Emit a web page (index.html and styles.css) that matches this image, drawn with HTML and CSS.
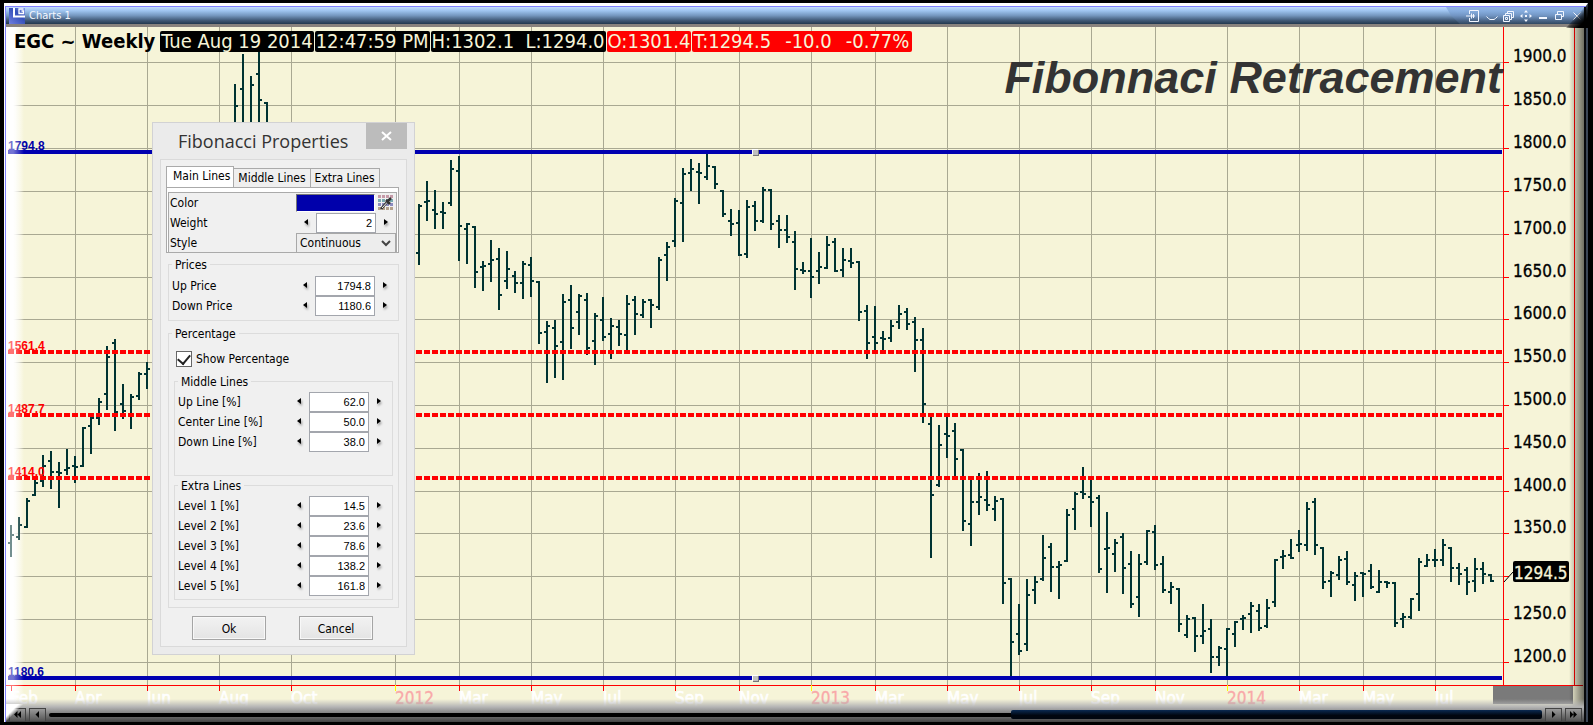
FILE: index.html
```html
<!DOCTYPE html>
<html lang="en">
<head>
<meta charset="utf-8">
<title>Charts 1</title>
<link rel="stylesheet" href="styles.css">
</head>
<body>
<main class="window">
  <header class="titlebar">
    <svg class="logo" width="19" height="16" viewBox="0 0 19 16" aria-hidden="true">
      <defs><linearGradient id="lg" x1="0" x2="1" y1="1" y2="0"><stop offset="0" stop-color="#6f7ee0"/><stop offset=".6" stop-color="#3450b8"/><stop offset="1" stop-color="#7f9ae6"/></linearGradient></defs>
      <rect x="3" width="16" height="16" fill="url(#lg)"/>
      <path d="M8 0v8.500h11" fill="none" stroke="#fff" stroke-width="2"/>
      <path d="M17.500 1h-4.500v4.500h4.500v-2.500h-2" fill="none" stroke="#fff" stroke-width="1.300"/>
    </svg>
    <h1 class="caption">Charts 1</h1>
    <nav class="tools" aria-label="Window">
      <button class="dock" aria-label="Dock"><svg width="13" height="12" viewBox="0 0 13 12"><path d="M3.500 4V.5h9v11h-9V8M0 6h9M5.500 3.500v5M7.500 4v4"/></svg></button>
      <button aria-label="Hide"><svg width="12" height="12" viewBox="0 0 12 12"><path d="M.5 6.500l2 2 1.500 1h4l1.500-1 2-2"/></svg></button>
      <button aria-label="Cascade"><svg width="12" height="12" viewBox="0 0 12 12"><path d="M.5 5.500h6v6h-6zM2.500 7.500h2v2h-2zM2.500 5V3.500h6v6H7M4.500 3V1.500h6v6H9"/></svg></button>
      <button aria-label="Move"><svg width="12" height="12" viewBox="0 0 12 12"><path class="solid" d="M6 0l2 2.500H4zM6 12l2-2.500H4zM0 6l2.500-2v4zM12 6L9.500 4v4zM5 5h2v2H5z"/></svg></button>
      <button aria-label="Minimize"><svg width="12" height="12" viewBox="0 0 12 12"><path d="M2 8h8" stroke-width="2"/></svg></button>
      <button aria-label="Restore"><svg width="12" height="12" viewBox="0 0 12 12"><path d="M1.500 4.500h6v5h-6zM3.500 4V1.500h6v5H8"/></svg></button>
      <button aria-label="Close"><svg width="12" height="12" viewBox="0 0 12 12"><path d="M2.500 2.500l7 7M9.500 2.500l-7 7"/></svg></button>
    </nav>
  </header>

  <section class="chart">
    <svg class="plot" id="plot" role="img" aria-label="EGC weekly price chart"></svg>
    <div class="quote">
      <strong class="symbol">EGC ~ Weekly</strong>
      <span class="cell">Tue Aug 19 2014</span>
      <span class="cell">12:47:59 PM</span>
      <span class="cell">H:1302.1&nbsp; L:1294.0</span>
      <span class="cell down">O:1301.4</span>
      <span class="cell down last"><span>T:1294.5</span><span>-10.0</span><span>-0.77%</span></span>
    </div>

    <form class="dialog" aria-labelledby="dlg-title">
      <div class="dialog-head">
        <h2 class="dialog-title" id="dlg-title">Fibonacci Properties</h2>
        <button class="dialog-close" type="button" aria-label="Close"><svg width="11" height="10" viewBox="0 0 11 10"><path d="M1 1l9 8M10 1L1 9" stroke="#fff" stroke-width="2"/></svg></button>
      </div>
      <div class="panel">
        <div class="tabs" role="tablist">
          <button class="tab active" type="button" role="tab" aria-selected="true">Main Lines</button>
          <button class="tab" type="button" role="tab">Middle Lines</button>
          <button class="tab" type="button" role="tab">Extra Lines</button>
        </div>
        <div class="tabpage"><div class="tabinner">
          <div class="row"><span class="label">Color</span><button class="swatch" type="button" aria-label="Line color"></button>
            <button class="palette" type="button" aria-label="Pick color"><svg width="16" height="16" viewBox="0 0 16 16"><g stroke-width="3" stroke-dasharray="3 1"><path d="M0 1.500h16" stroke="#c59aa8"/><path d="M0 5.500h16" stroke="#78aab0"/><path d="M0 9.500h16" stroke="#8c8cc0"/><path d="M0 13.500h16" stroke="#b4a18c"/></g><path d="M3 14l7-8" stroke="#333" stroke-width="2.500"/><path d="M4 13l5.500-6" stroke="#eee"/><path d="M8 5l4 4M10 6l3-3" stroke="#333" stroke-width="2.500"/></svg></button></div>
          <div class="row"><label class="label" for="weight">Weight</label><button class="step prev" type="button" aria-label="Less"></button><input class="num" id="weight" value="2"><button class="step next" type="button" aria-label="More"></button></div>
          <div class="row"><label class="label" for="style">Style</label><span class="pick"><select id="style"><option>Continuous</option></select><svg width="10" height="7" viewBox="0 0 10 7"><path d="M1 1l4 4 4-4" fill="none" stroke="#444" stroke-width="2"/></svg></span></div>
        </div></div>

        <fieldset class="group prices">
          <legend>Prices</legend>
          <div class="row"><label class="label" for="up">Up Price</label><button class="step prev" type="button" aria-label="Less"></button><input class="num" id="up" value="1794.8"><button class="step next" type="button" aria-label="More"></button></div>
          <div class="row"><label class="label" for="down">Down Price</label><button class="step prev" type="button" aria-label="Less"></button><input class="num" id="down" value="1180.6"><button class="step next" type="button" aria-label="More"></button></div>
        </fieldset>

        <fieldset class="group percent">
          <legend>Percentage</legend>
          <div class="check"><input type="checkbox" id="show" checked><label for="show">Show Percentage</label></div>
          <fieldset class="group middle">
            <legend>Middle Lines</legend>
            <div class="row"><label class="label" for="m1">Up Line [%]</label><button class="step prev" type="button" aria-label="Less"></button><input class="num" id="m1" value="62.0"><button class="step next" type="button" aria-label="More"></button></div>
            <div class="row"><label class="label" for="m2">Center Line [%]</label><button class="step prev" type="button" aria-label="Less"></button><input class="num" id="m2" value="50.0"><button class="step next" type="button" aria-label="More"></button></div>
            <div class="row"><label class="label" for="m3">Down Line [%]</label><button class="step prev" type="button" aria-label="Less"></button><input class="num" id="m3" value="38.0"><button class="step next" type="button" aria-label="More"></button></div>
          </fieldset>
          <fieldset class="group extra">
            <legend>Extra Lines</legend>
            <div class="row"><label class="label" for="e1">Level 1 [%]</label><button class="step prev" type="button" aria-label="Less"></button><input class="num" id="e1" value="14.5"><button class="step next" type="button" aria-label="More"></button></div>
            <div class="row"><label class="label" for="e2">Level 2 [%]</label><button class="step prev" type="button" aria-label="Less"></button><input class="num" id="e2" value="23.6"><button class="step next" type="button" aria-label="More"></button></div>
            <div class="row"><label class="label" for="e3">Level 3 [%]</label><button class="step prev" type="button" aria-label="Less"></button><input class="num" id="e3" value="78.6"><button class="step next" type="button" aria-label="More"></button></div>
            <div class="row"><label class="label" for="e4">Level 4 [%]</label><button class="step prev" type="button" aria-label="Less"></button><input class="num" id="e4" value="138.2"><button class="step next" type="button" aria-label="More"></button></div>
            <div class="row"><label class="label" for="e5">Level 5 [%]</label><button class="step prev" type="button" aria-label="Less"></button><input class="num" id="e5" value="161.8"><button class="step next" type="button" aria-label="More"></button></div>
          </fieldset>
        </fieldset>
        <div class="actions"><button class="push" type="button">Ok</button><button class="push" type="button">Cancel</button></div>
      </div>
    </form>
  </section>

  <footer class="scroller">
    <button class="nudge" aria-label="First"><svg width="7" height="7" viewBox="0 0 7 7"><path d="M3.500 0v7L0 3.500zM7 0v7L3.500 3.500z"/></svg></button>
    <button class="nudge" aria-label="Back"><svg width="7" height="7" viewBox="0 0 7 7"><path d="M5 0v7L1.500 3.500z"/></svg></button>
    <div class="track" role="scrollbar" aria-label="Time" aria-controls="plot" aria-valuenow="100"><div class="thumb"></div></div>
    <button class="nudge" aria-label="Forward"><svg width="7" height="7" viewBox="0 0 7 7"><path d="M2 0v7l3.500-3.500z"/></svg></button>
    <button class="nudge" aria-label="Last"><svg width="7" height="7" viewBox="0 0 7 7"><path d="M0 0v7l3.500-3.500zM3.500 0v7L7 3.500z"/></svg></button>
  </footer>
</main>
<script src="chart.js"></script>
</body>
</html>
```
FILE: styles.css
```css
* { box-sizing: border-box; }
html, body { height: 100%; }
body {
  margin: 0;
  padding: 3px 5px 3px 4px;
  background: #000;
  font: 12px/16px "DejaVu Sans Condensed", "DejaVu Sans", sans-serif;
  color: #000;
}
button, input, select { font: inherit; color: inherit; margin: 0; padding: 0; border: 0; background: none; }
h1, h2 { margin: 0; font-weight: normal; }

.window {
  position: relative;
  display: flex;
  flex-direction: column;
  height: 100%;
  border-top: 3px solid #fff;
  border-left: 1px solid #fff;
  border-right: 2px solid #3c4656;
  box-shadow: inset 1px 1px #8080ff, inset -2px 0 #08090c;
  padding: 1px 2px 0 1px;
}
.window::after {
  content: "";
  position: absolute;
  top: -3px;
  right: -2px;
  width: 22px;
  height: 25px;
  background: linear-gradient(135deg, transparent 46%, rgba(0, 0, 0, .6) 60%, #000 78%);
  clip-path: polygon(100% 0, 100% 100%, 0 100%);
  pointer-events: none;
}

/* Title bar */
.titlebar {
  flex: none;
  display: flex;
  align-items: stretch;
  height: 20px;
  background: linear-gradient(#c4dcfa, #9ec4f0 22%, #7597bf 50%, #3e5673 80%, #22384f);
  border-bottom: 3px solid #88827e;
}
.logo { flex: none; margin-top: 1px; margin-right: 4px; }
.caption { flex: 1; font-size: 11px; line-height: 17px; color: #f4f8ff; }
.tools {
  display: flex;
  align-items: center;
  gap: 5px;
  padding: 0 1px 0 20px;
  background: linear-gradient(rgba(100, 140, 200, .5), rgba(130, 160, 210, .15));
  clip-path: polygon(0 0, 100% 0, 100% 100%, 14px 100%, 5px 50%);
}
.tools button { width: 12px; height: 12px; display: block; }
.tools .dock { width: 13px; margin-right: 2px; }
.tools svg { display: block; fill: none; stroke: #f2f6ff; }
.tools .solid { fill: #f2f6ff; stroke: none; }

/* Chart */
.chart {
  position: relative;
  flex: 1;
  min-height: 0;
  background: #f6f4d8;
}
.chart::after {
  content: "";
  position: absolute;
  left: 0;
  right: 0;
  bottom: 0;
  height: 8px;
  background: linear-gradient(rgba(176, 176, 176, 0), #b4b4b4);
}
.plot { position: absolute; inset: 0; width: 100%; height: 100%; display: block; }
.grid { stroke: #a9a892; }
.bars { stroke: #003333; stroke-width: 2; fill: none; }
.main-line { stroke: #0000b0; stroke-width: 4; }
.level { stroke: #f00; stroke-width: 4; stroke-dasharray: 6 2; }
.axis { stroke: #f00; }
.axis-outer { stroke: #d00000; }
.year-tick { stroke: #ff0; }
.connector { stroke: #000; fill: none; }
.price { font-size: 17px; stroke: #000; stroke-width: .3; }
.now { fill: #f6f4d8; stroke: #f6f4d8; }
.month { font-size: 17px; fill: #fff; stroke: #fff; stroke-width: .6; }
.year { font-size: 17px; fill: #f9a9a9; stroke: #f9a9a9; stroke-width: .3; }
.tag { font: bold 12px "Liberation Sans", sans-serif; }
.tag-main { fill: #0000a8; }
.tag-level { fill: #f00; }
.headline { font: italic bold 45px "Liberation Sans", sans-serif; fill: #333; text-anchor: end; }

.quote {
  position: absolute;
  top: 4px;
  left: 8px;
  display: flex;
  gap: 1px;
  font-size: 20px;
  line-height: 21px;
  white-space: nowrap;
}
.symbol { margin-right: 4px; }
.cell { padding: 0 1px; border-radius: 2px; background: #000; color: #f6f4d8; }
.down { background: #f00; }
.last { display: flex; gap: 14px; padding-right: 3px; }

/* Properties dialog */
.dialog {
  position: absolute;
  left: 146px;
  top: 95px;
  z-index: 1;
  width: 263px;
  padding: 0 7px 7px;
  border: 1px solid #d2d2d4;
  background: #ebebeb;
}
.dialog-head { display: flex; justify-content: space-between; align-items: flex-start; height: 36px; padding-left: 18px; }
.dialog-title { font: 18px/36px "Open Sans", sans-serif; color: #333; white-space: nowrap; }
.dialog-close { width: 41px; height: 26px; background: #bcbcbc; }
.dialog-close svg { display: block; margin: auto; }
.panel { padding: 6px 7px 6px 5px; border: 1px solid #dadada; background: #f0f0f0; }
.tabs { display: flex; align-items: flex-end; height: 21px; }
.tab { height: 19px; padding: 0 4px; border: 1px solid #aaa; border-left: 0; border-bottom: 0; background: #efefef; white-space: nowrap; }
.tab.active { height: 21px; padding: 0 3px 2px 6px; border-left: 1px solid #aaa; background: #fff; }
.tabpage { padding: 4px 1px 0; border: 1px solid #aaa; background: #fff; }
.tabinner { padding-bottom: 0; border: 1px solid #aaa; border-bottom: 0; background: #f0f0f0; }
.row { display: flex; align-items: center; height: 20px; }
.tabinner .row:last-child { height: 19px; }
.label { flex: 1; padding-left: 1px; white-space: nowrap; }
.num {
  width: 60px;
  height: 20px;
  padding: 0 3px;
  border: 1px solid #a3a6ad;
  background: #fff;
  font: 11px "Liberation Sans", sans-serif;
  text-align: right;
}
.step { width: 20px; height: 20px; }
.step::before { content: ""; display: block; width: 0; margin: 0 auto 2px; border: 3px solid transparent; filter: drop-shadow(1px 2px 1px rgba(0, 0, 0, .35)); }
.prev::before { border-right: 4px solid #000; border-left: 0; }
.next::before { border-left: 4px solid #000; border-right: 0; }
.swatch { width: 79px; height: 18px; border: 1px solid; border-color: #777 #fff #fff #777; background: #0000ab; }
.palette { width: 16px; height: 16px; margin: 0 2px 0 3px; }
.palette svg { display: block; }
.pick { position: relative; width: 100px; height: 19px; }
.pick select { display: block; width: 100%; height: 19px; padding-left: 3px; border: 1px solid #a8a8a8; border-bottom: 0; background: #ededed; appearance: none; }
.pick svg { position: absolute; right: 5px; top: 7px; pointer-events: none; }
.group { min-width: 0; margin: 0 0 0 2px; border: 1px solid #dcdcdc; padding: 0 3px; }
.group legend { padding: 2px 3px 0; line-height: 16px; }
.group .label { padding-left: 0; }
.prices { margin-top: 2px; padding-top: 3px; padding-bottom: 4px; }
.percent { margin-top: 3px; padding: 7px 5px; }
.percent > legend { margin-left: -2px; }
.percent .group { margin-left: 0; }
.check { display: flex; align-items: center; gap: 4px; height: 20px; padding-left: 2px; margin-bottom: 3px; }
.check input { appearance: none; width: 16px; height: 16px; border: 1px solid #666; background: #fff; }
.check input:checked::before { content: ""; display: block; width: 6px; height: 10px; margin: 0 auto; border: solid #222; border-width: 0 2px 2px 0; transform: rotate(40deg); }
.middle { padding-top: 2px; padding-bottom: 23px; }
.extra { padding-top: 2px; padding-bottom: 3px; }
.actions { display: flex; justify-content: space-between; margin-top: 8px; padding: 0 26px; }
.push { width: 74px; height: 24px; padding-top: 1px; border: 1px solid #a5a5a5; background: linear-gradient(#f2f2f2, #e4e4e4); box-shadow: inset 0 0 0 1px #f8f8f8; }

/* Time scroller */
.scroller {
  flex: none;
  position: relative;
  display: flex;
  align-items: center;
  gap: 3px;
  height: 15px;
  padding: 0 2px 0 3px;
  background: linear-gradient(#b4b4b4, #777 50%, #444);
}
.scroller::before {
  content: "";
  position: absolute;
  left: 0;
  top: -3px;
  width: 18px;
  height: 18px;
  background: linear-gradient(135deg, #fff 35%, transparent 50%);
}
.nudge { flex: none; width: 17px; height: 14px; border: 1px solid #444; background: linear-gradient(#999, #555); }
.nudge svg { display: block; margin: auto; }
.track { flex: 1; height: 4px; border-radius: 2px; background: #000; display: flex; justify-content: flex-end; align-items: center; }
.thumb { flex: none; width: 35.6%; height: 9px; border-radius: 2px; background: linear-gradient(#0a2a52, #00060f 60%); }
```
FILE: chart.js
```js
// Weekly bars as [week, high, low, open, close] on the 1578 x 680 design grid (origin 6, 27).
const BARS = `0 525 557 543 535|1 517 540 537 525|2 498 528 527 501|3 479 496 495 483|4 455 487 481 466|5 451 489 461 472
6 462 508 472 473|7 449 475 470 468|8 456 483 466 467|9 427 467 466 428|10 417 454 426 418|11 398 425 418 402
12 346 410 394 357|13 339 431 343 412|14 384 419 404 411|15 394 429 414 397|16 372 400 396 374|17 362 389 374 369
28 84 140 130 106|29 54 140 89 130|30 76 140 130 85|31 52 140 74 100|32 102 150 103 140
51 204 265 253 206|52 181 221 202 201|53 190 229 210 214|54 202 229 212 213|55 160 206 203 169|56 156 261 171 226
57 223 264 229 224|58 226 288 227 272|59 261 291 267 266|60 240 282 264 260|61 248 310 259 295|62 251 289 281 269
63 271 293 276 283|64 261 299 283 264|65 257 297 265 281|66 281 344 282 333|67 321 383 332 326|68 320 378 328 346
69 294 380 342 302|70 285 349 300 328|71 294 335 312 296|72 293 355 300 348|73 313 365 341 316|74 297 341 320 337
75 318 359 334 326|76 320 346 327 334|77 295 351 335 304|78 296 335 300 314|79 299 318 315 302|80 299 328 300 305
81 257 310 307 260|82 242 281 255 247|83 198 247 241 201|84 168 242 203 174|85 159 191 173 169|86 163 204 172 173
87 154 180 177 166|88 166 189 167 184|89 190 217 191 214|90 209 236 221 224|91 210 256 223 255|92 200 258 254 207
93 201 231 206 221|94 187 223 221 190|95 189 230 190 224|96 215 248 221 230|97 215 243 230 237|98 231 290 242 269
99 262 274 270 271|100 238 298 271 277|101 252 284 271 267|102 236 269 268 245|103 238 272 242 271|104 248 277 270 260
105 248 268 261 263|106 261 321 262 312|107 305 359 311 343|108 306 350 337 343|109 331 350 338 339|110 320 342 338 326
111 305 329 322 314|112 308 330 312 324|113 317 372 322 340|114 328 423 340 404|115 417 558 424 495|116 425 487 485 445
117 417 458 434 436|118 423 476 431 459|119 449 531 450 521|120 479 546 524 502|121 473 515 502 497|122 471 511 500 505
123 496 521 509 501|124 498 604 499 583|125 578 676 579 642|126 604 655 634 651|127 579 651 644 595|128 576 604 590 582
129 535 581 579 558|130 543 592 547 567|131 561 599 567 565|132 509 562 561 515|133 492 530 509 494|134 467 499 492 494
135 479 527 497 502|136 495 573 498 569|137 512 593 549 548|138 539 572 554 543|139 533 594 537 568|140 551 608 564 604
141 554 617 597 564|142 530 565 562 531|143 525 570 532 565|144 556 593 564 590|145 582 604 592 587|146 588 632 589 624
147 615 638 635 619|148 617 652 618 636|149 604 644 636 631|150 619 673 629 657|151 646 666 657 648|152 628 676 649 629
153 621 647 634 622|154 615 630 619 618|155 602 633 614 606|156 604 631 611 628|157 599 628 626 608|158 559 607 602 560
159 550 569 557 556|160 539 559 555 558|161 530 552 545 544|162 502 551 545 509|163 498 555 502 545|164 547 589 548 582
165 571 597 581 573|166 556 580 575 560|167 551 585 559 582|168 572 601 585 576|169 572 597 573 574|170 564 589 571 587
171 570 593 592 582|172 581 588 582 583|173 582 627 583 623|174 613 628 619 617|175 598 619 617 599|176 558 611 594 562
177 554 567 566 560|178 549 567 560 560|179 539 566 560 545|180 547 582 548 568|181 563 585 568 574|182 567 595 570 582
183 558 592 581 569|184 562 584 569 574|185 574 582 575 581`.split(/[|\n]/).map(s => s.split(' ').map(Number));

const ROWS = [62, 105, 148, 191, 234, 277, 319, 362, 405, 448, 491, 533, 576, 619, 662];
const MONTHS = [['Feb', 11], ['Apr', 75], ['Jun', 147], ['Aug', 219], ['Oct', 291], ['2012', 395], ['Mar', 459],
  ['May', 531], ['Jul', 603], ['Sep', 675], ['Nov', 739], ['2013', 811], ['Mar', 875], ['May', 947], ['Jul', 1019],
  ['Sep', 1091], ['Nov', 1155], ['2014', 1227], ['Mar', 1299], ['May', 1363], ['Jul', 1435]];
const LEVELS = [['1794.8', 152, true], ['1561.4', 352], ['1487.7', 415], ['1414.0', 478], ['1180.6', 678, true]];

const plot = document.getElementById('plot');

function draw() {
  const { width, height } = plot.getBoundingClientRect();
  const X = v => Math.round((v - 6) * width / 1578);
  const Y = v => Math.round((v - 27) * height / 680);
  const line = (cls, x1, y1, x2, y2) => `<line class="${cls}" x1="${x1}" y1="${y1}" x2="${x2}" y2="${y2}"/>`;
  const text = (cls, x, y, s) => `<text class="${cls}" x="${x}" y="${y}">${s}</text>`;
  const right = X(1503);
  const base = Y(685);
  let out = `<defs>
    <linearGradient id="fadeUnder"><stop offset=".4" stop-color="#fff"/><stop offset="1" stop-color="#fff" stop-opacity="0"/></linearGradient>
    <linearGradient id="fadeOver"><stop offset=".4" stop-color="#fff" stop-opacity=".45"/><stop offset="1" stop-color="#fff" stop-opacity="0"/></linearGradient>
    <linearGradient id="edge"><stop offset="0" stop-color="#000" stop-opacity="0"/><stop offset="1" stop-color="#000" stop-opacity=".55"/></linearGradient></defs>
    <g shape-rendering="crispEdges">`;

  for (const r of ROWS) out += line('grid', 0, Y(r) + .5, right, Y(r) + .5);
  for (const [, x] of MONTHS.slice(1)) out += line('grid', X(x) + .5, 0, X(x) + .5, base);
  out += `<rect width="18" height="${height}" fill="url(#fadeUnder)"/>`;

  out += '<path class="bars" d="' + BARS.map(([i, h, l, o, c]) => {
    const x = X(11 + 8 * i);
    return `M${x} ${Y(h)}V${Y(l)}M${x - 3} ${Y(o)}H${x}M${x} ${Y(c)}H${x + 3}`;
  }).join('') + '"/>';

  for (const [, y, main] of LEVELS) out += line(main ? 'main-line' : 'level', 2, Y(y), right - 1, Y(y));
  for (const y of [152, 678]) {
    const x = X(753);
    out += `<path d="M${x - 1} ${Y(y) - 3}h6v6h-6z" fill="#fff"/><path d="M${x} ${Y(y) - 2}h6v6h-6z" fill="#777"/><path d="M${x} ${Y(y) - 2}h5v5h-5z" fill="#c0c0c0"/>`;
  }

  out += line('axis', 0, base + .5, X(1583), base + .5) + line('axis', right + .5, 0, right + .5, base);
  for (const r of ROWS) out += line('axis', right, Y(r) + .5, right + 6, Y(r) + .5);
  for (const [s, x] of MONTHS) out += line(s[0] === '2' ? 'year-tick' : 'axis', X(x) + .5, base, X(x) + .5, base + 6);
  out += `<rect x="${X(1493)}" y="${base + 1}" width="${X(1573) - X(1493)}" height="18" fill="#7a7a7a"/></g>`;

  for (const [s, y, main] of LEVELS) out += text('tag ' + (main ? 'tag-main' : 'tag-level'), 2, Y(y) - 2, s);
  ROWS.forEach((r, n) => { if (n !== 12) out += text('price', right + 10, Y(r), (1900 - 50 * n) + '.0'); });
  out += `<path class="connector" d="M${right + 1} ${Y(582)}L${right + 10} ${Y(572)}"/>`;
  out += `<rect x="${right + 10}" y="${Y(561)}" width="56" height="21" rx="2"/>` + text('price now', right + 11, Y(579), '1294.5');
  for (const [s, x] of MONTHS) out += text(s[0] === '2' ? 'year' : 'month', X(x), base + 19, s);
  out += text('headline', right - 1, Y(93), 'Fibonnaci Retracement');
  out += `<rect width="18" height="${height}" fill="url(#fadeOver)"/>`;
  out += `<rect x="${width - 15}" width="15" height="${height}" fill="url(#edge)"/>`;
  out += line('axis-outer', X(1574) + .5, 0, X(1574) + .5, base);
  plot.innerHTML = out;
}

draw();
addEventListener('resize', draw);
```
